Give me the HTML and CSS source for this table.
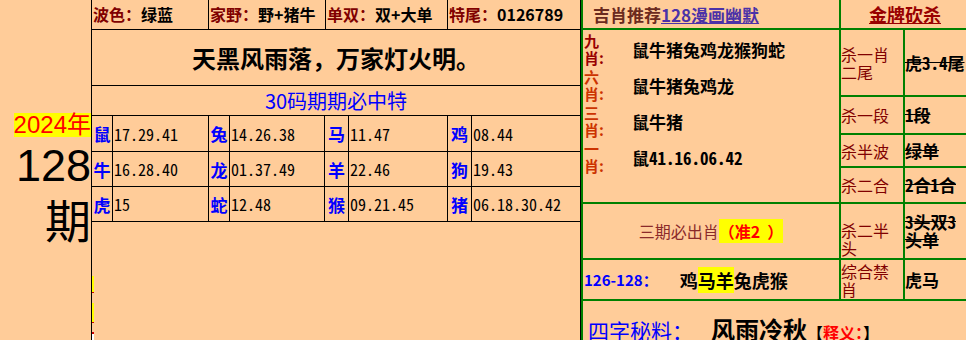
FILE: index.html
```html
<!DOCTYPE html>
<html lang="zh">
<head>
<meta charset="utf-8">
<title>128期</title>
<link rel="stylesheet" href="styles.css">
</head>
<body>
<div class="page">
  <div class="left">
    <div class="side">
      <div class="year">2024年</div>
      <div class="issue">128</div>
      <div class="qi">期</div>
    </div>
    <div class="main">
      <div class="toprow">
        <div class="tc w1"><span class="lb">波色：</span>绿蓝</div>
        <div class="tc w2"><span class="lb">家野：</span>野+猪牛</div>
        <div class="tc w3"><span class="lb">单双：</span>双+大单</div>
        <div class="tc w4"><span class="lb">特尾：</span>0126789</div>
      </div>
      <div class="poem">天黑风雨落，万家灯火明。</div>
      <div class="t30">30码期期必中特</div>
      <div class="zgrid">
        <div class="z an">鼠</div><div class="z nm">17.29.41</div>
        <div class="z an">兔</div><div class="z nm">14.26.38</div>
        <div class="z an">马</div><div class="z nm">11.47</div>
        <div class="z an">鸡</div><div class="z nm">08.44</div>
        <div class="z an">牛</div><div class="z nm">16.28.40</div>
        <div class="z an">龙</div><div class="z nm">01.37.49</div>
        <div class="z an">羊</div><div class="z nm">22.46</div>
        <div class="z an">狗</div><div class="z nm">19.43</div>
        <div class="z an">虎</div><div class="z nm">15</div>
        <div class="z an">蛇</div><div class="z nm">12.48</div>
        <div class="z an">猴</div><div class="z nm">09.21.45</div>
        <div class="z an">猪</div><div class="z nm">06.18.30.42</div>
      </div>
      <div class="rest">
        <div class="strip s-a"></div>
        <div class="strip s-b"></div>
        <div class="strip s-c"></div>
      </div>
    </div>
  </div>

  <div class="right">
    <div class="rc h1"><span class="jx">吉肖推荐</span><span class="lnk">128漫画幽默</span></div>
    <div class="rc h2"><span class="gold">金牌砍杀</span></div>

    <div class="rc sec2">
      <div class="lb2 dk">九<br>肖:</div><div class="v2">鼠牛猪兔鸡龙猴狗蛇</div>
      <div class="lb2 or">六<br>肖:</div><div class="v2">鼠牛猪兔鸡龙</div>
      <div class="lb2 or">三<br>肖:</div><div class="v2">鼠牛猪</div>
      <div class="lb2 or">一<br>肖:</div><div class="v2">鼠<span class="mono">41.16.06.42</span></div>
    </div>

    <div class="rc kl r2">杀一肖二尾</div><div class="rc kv r2">虎3.4尾</div>
    <div class="rc kl r3">杀一段</div><div class="rc kv r3">1段</div>
    <div class="rc kl r4">杀半波</div><div class="rc kv r4">绿单</div>
    <div class="rc kl r5">杀二合</div><div class="rc kv r5">2合1合</div>

    <div class="rc s3"><span class="sq">三期必出肖</span><span class="zhun">（准2&nbsp;&nbsp;）</span></div>
    <div class="rc kl r6 low">杀二半头</div><div class="rc kv r6">3头双3头单</div>

    <div class="rc s4"><span class="rng">126-128：</span><span class="ani">鸡<span class="hl">马羊</span>兔虎猴</span></div>
    <div class="rc kl r7">综合禁肖</div><div class="rc kv r7 nostrike">虎马</div>

    <div class="rc s5"><span class="szm">四字秘料：</span><span class="fy">风雨冷秋</span><span class="br">【</span><span class="sy">释义：</span><span class="br">】</span></div>
  </div>
</div>
</body>
</html>
```

FILE: styles.css
```css
* { box-sizing: border-box; }

html, body {
  margin: 0;
  padding: 0;
  overflow: hidden;
  background: #FFCC99;
}

body {
  width: 966px;
  height: 340px;
  font-family: "Noto Sans CJK SC", sans-serif;
  color: #000;
}

.page {
  display: flex;
  width: 990px;
  height: 340px;
}

/* ---------- left table ---------- */
.left {
  display: flex;
  flex: none;
  width: 581px;
}

.side {
  width: 92px;
  border-right: 1px solid #000;
  display: flex;
  flex-direction: column;
  align-items: flex-end;
  padding-top: 113px;
}

.year {
  background: #FFFF00;
  color: #FF0000;
  font-family: "Liberation Sans", "Noto Sans CJK SC", sans-serif;
  font-size: 24px;
  line-height: 24px;
}

.issue {
  font-family: "Liberation Sans", sans-serif;
  font-size: 45px;
  line-height: 45px;
  margin-top: 6px;
}

.qi {
  font-size: 46px;
  line-height: 46px;
  margin-top: 7px;
}

.main {
  width: 489px;
  border-right: 1px solid #000;
  display: flex;
  flex-direction: column;
}

.toprow {
  display: flex;
  height: 30px;
  border-bottom: 1px solid #000;
}

.tc {
  height: 29px;
  border-right: 1px solid #000;
  font-size: 16px;
  font-weight: bold;
  line-height: 28px;
  padding-left: 1px;
  white-space: nowrap;
  overflow: hidden;
}
.w1 { width: 117px; }
.w2 { width: 117px; }
.w3 { width: 122px; }
.w4 { width: 132px; border-right: none; }
.lb { color: #800000; }

.poem {
  height: 56px;
  border-bottom: 1px solid #000;
  display: flex;
  align-items: center;
  justify-content: center;
  font-size: 24px;
  font-weight: bold;
}

.t30 {
  height: 30px;
  border-bottom: 1px solid #000;
  display: flex;
  align-items: center;
  justify-content: center;
  color: #0000FF;
  font-size: 20px;
}

.zgrid {
  display: grid;
  grid-template-columns: 21px 96px 21px 95px 24px 99px 24px 108px;
  grid-template-rows: 36px 35px 35px;
}

.z {
  border-right: 1px solid #000;
  border-bottom: 1px solid #000;
  display: flex;
  align-items: center;
}
.z:nth-child(8n) { border-right: none; }

.an {
  justify-content: center;
  color: #0000FF;
  font-weight: bold;
  font-size: 17px;
}

.nm {
  font-family: "Noto Sans Mono CJK SC", "DejaVu Sans Mono", monospace;
  font-size: 16px;
  padding-left: 1px;
}

.rest {
  flex: 1;
  display: flex;
  flex-direction: column;
  padding-top: 54px;
}

.strip { width: 2px; }
.s-a { height: 17px; background: #FFFF00; border-bottom: 1px solid #CC0000; }
.s-b { height: 20px; margin-top: 10px; background: #FFFF00; border-bottom: 1px solid #CC0000; }
.s-c { height: 8px; margin-top: 9px; background: #FFFFFF; border-top: 2px solid #CC0000; }

/* ---------- right table ---------- */
.right {
  flex: none;
  display: grid;
  grid-template-columns: 256px 62px 64px;
  grid-template-rows: 28px 65px 36px 31px 34px 54px 39px 60px;
  gap: 2px;
  padding: 0 2px;
  background: #008000;
}

.rc { background: #FFCC99; }

.h1 {
  grid-column: 1;
  grid-row: 1;
  display: flex;
  align-items: center;
  padding-left: 10px;
  font-size: 17px;
  font-weight: bold;
  white-space: nowrap;
}
.jx { color: #6B2A1E; }
.lnk { color: #4B32A8; text-decoration: underline; }

.h2 {
  grid-column: 2 / 4;
  grid-row: 1;
  display: flex;
  align-items: center;
  justify-content: center;
}
.gold {
  color: #990000;
  font-size: 18px;
  font-weight: bold;
  text-decoration: underline;
}

.sec2 {
  grid-column: 1;
  grid-row: 2 / 6;
  display: grid;
  grid-template-columns: 48px 1fr;
  grid-auto-rows: 36px;
  padding: 1px 0 0 1px;
}

.lb2 {
  align-self: center;
  font-size: 15px;
  font-weight: bold;
  line-height: 17.5px;
}
.dk { color: #990000; }
.or { color: #CC3300; }

.v2 {
  align-self: center;
  font-size: 17px;
  font-weight: bold;
}
.mono {
  font-family: "Noto Sans Mono CJK SC", "DejaVu Sans Mono", monospace;
}

.kl {
  grid-column: 2;
  display: flex;
  align-items: center;
  color: #800000;
  font-size: 16px;
  line-height: 18px;
}

.kv {
  grid-column: 3;
  display: flex;
  align-items: center;
  font-family: "Noto Sans Mono CJK SC", "Noto Sans CJK SC", monospace;
  font-size: 17px;
  font-weight: bold;
  line-height: 18px;
  text-decoration: line-through;
}
.nostrike { text-decoration: none; }

.r2 { grid-row: 2; }
.r3 { grid-row: 3; }
.r4 { grid-row: 4; }
.r5 { grid-row: 5; }
.r6 { grid-row: 6; }
.r7 { grid-row: 7; }
.low { align-items: flex-end; padding-bottom: 1px; }

.s3 {
  grid-column: 1;
  grid-row: 6;
  display: flex;
  align-items: center;
  justify-content: center;
  font-size: 16px;
}
.sq { color: #8B2A2A; }
.zhun { background: #FFFF00; color: #FF0000; font-weight: bold; }

.s4 {
  grid-column: 1;
  grid-row: 7;
  display: flex;
  align-items: center;
  padding-left: 1px;
  white-space: nowrap;
}
.rng { color: #0000FF; font-weight: bold; font-size: 15px; }
.ani { font-size: 18px; font-weight: bold; margin-left: 22px; }
.hl { background: #FFFF00; }

.s5 {
  grid-column: 1 / 4;
  grid-row: 8;
  padding: 14px 0 0 5px;
  line-height: 28px;
  white-space: nowrap;
}
.szm { color: #0000FF; font-size: 21px; }
.fy { font-size: 24px; font-weight: bold; margin-left: 18px; }
.br { font-size: 16px; font-weight: bold; }
.sy { color: #FF0000; font-size: 16px; font-weight: bold; }
```
